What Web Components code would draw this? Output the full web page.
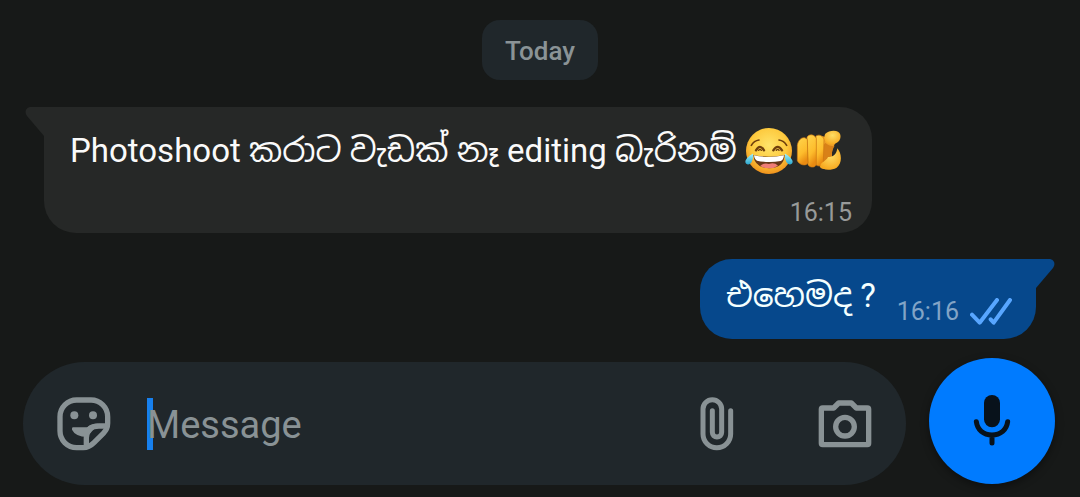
<!DOCTYPE html>
<html lang="si">
<head>
<meta charset="utf-8">
<meta name="viewport" content="width=device-width, initial-scale=1">
<title>Chat</title>
<style>
  html { background: #171918; }
  body { margin: 0; font-family: Roboto, "Noto Sans Sinhala", "Noto Sans", sans-serif; color: #fff; }
</style>
</head>
<body>
<chat-screen>
  <date-chip slot="log">Today</date-chip>
  <chat-message slot="log" side="in" time="16:15">Photoshoot කරාට වැඩක් නෑ editing බැරිනම් <emoji-joy></emoji-joy><emoji-point></emoji-point></chat-message>
  <chat-message slot="log" side="out" time="16:16">එහෙමද ?</chat-message>
  <chat-composer slot="composer"></chat-composer>
</chat-screen>

<script>
const define = (name, html, setup) => customElements.define(name, class extends HTMLElement {
  constructor() {
    super();
    this.attachShadow({ mode: 'open' }).innerHTML = html;
  }
  connectedCallback() { if (setup) setup(this, this.shadowRoot); }
});

define('chat-screen', `
  <style>
    :host { display: block; box-sizing: border-box; padding: 20px 24px 12px; }
    main { display: flex; flex-direction: column; gap: 26px; }
    footer { margin-top: 19px; }
  </style>
  <main><slot name="log"></slot></main>
  <footer><slot name="composer"></slot></footer>`);

define('date-chip', `
  <style>
    :host { display: block; box-sizing: border-box; height: 60px; align-self: center; padding: 1px 23px 0; margin-bottom: 1px; border-radius: 18px;
      background: #20272b; color: #8a9396; font-size: 26px; font-weight: 500; line-height: 60px; }
  </style>
  <slot></slot>`);

define('chat-message', `
  <style>
    :host { display: block; position: relative; box-sizing: border-box; max-width: 90%; border-radius: 32px; }
    :host([side="in"]) { align-self: flex-start; margin-left: 20px; padding: 19px 20px 5px 26px;
      border-top-left-radius: 0; background: #262827; --tone: #262827; color: #fafafa; }
    :host([side="out"]) { align-self: flex-end; margin-right: 20px; padding: 0 24px 0 26px; display: flex; gap: 21px;
      border-top-right-radius: 0; background: #06488c; --tone: #06488c; color: #f4ffff; }
    .text { font-size: 33px; line-height: 50px; white-space: nowrap; }
    :host([side="in"]) .text { padding-right: 10px; }
    :host([side="out"]) .text { line-height: 74px; padding-bottom: 6px; }
    .meta { display: flex; align-items: center; justify-content: flex-end; gap: 11px;
      font-size: 25px; line-height: 30px; color: #989a99; }
    :host([side="in"]) .meta { margin-top: 22px; }
    :host([side="out"]) .meta { align-self: flex-end; padding-bottom: 12px; color: #82a4c6; }
    .tail { position: absolute; top: 0; width: 20px; height: 30px; fill: var(--tone); }
    :host([side="in"]) .tail { right: calc(100% - 1px); }
    :host([side="out"]) .tail { left: calc(100% - 1px); transform: scaleX(-1); }
    .ticks { width: 42px; height: 28px; fill: none; stroke: #58a6ff; stroke-width: 12; stroke-linecap: round; stroke-linejoin: round; }
    :host([side="in"]) .ticks { display: none; }
  </style>
  <svg class="tail" viewBox="0 0 20 30" aria-hidden="true"><path d="M20 0H6C1 0-1 5 2 9L19 29H20Z"/></svg>
  <div class="text"><slot></slot></div>
  <div class="meta"><time></time>
    <svg class="ticks" viewBox="0 0 126 84" role="img" aria-label="Read"><path d="M6 50L29 74L81 6M62 64L71 74L120 6"/></svg>
  </div>`, (el, root) => { root.querySelector('time').textContent = el.getAttribute('time'); });

define('emoji-joy', `
  <style>
    :host { display: inline-block; vertical-align: -13px; }
    svg { display: block; width: 48px; height: 48px; }
  </style>
  <svg viewBox="0 0 144 144" role="img" aria-label="Face with tears of joy">
    <defs>
      <radialGradient id="f" cx=".5" cy=".38" r=".65"><stop offset="0" stop-color="#ffe46a"/><stop offset=".6" stop-color="#fdc93d"/><stop offset="1" stop-color="#ed8b18"/></radialGradient>
      <linearGradient id="t" x2="0" y2="1"><stop stop-color="#a4f2fa"/><stop offset="1" stop-color="#2ba7cf"/></linearGradient>
    </defs>
    <circle cx="72" cy="72" r="69" fill="url(#f)"/>
    <g fill="none" stroke="#70400d" stroke-linecap="round">
      <path d="M19 55Q27 41 42 39M102 39Q117 41 125 55" stroke-width="5"/>
      <path d="M33 70Q45 49 57 70M85 70Q98 49 111 70" stroke-width="7"/>
      <path d="M41 70Q45 64 49 70M94 70Q98 64 102 70" stroke-width="4"/>
    </g>
    <path d="M25 84Q72 94 119 84Q117 122 72 124Q28 122 25 84Z" fill="#673718"/>
    <path d="M27 85Q72 95 117 85Q116 99 107 102Q72 109 36 101Q28 97 27 85Z" fill="#fff"/>
    <path d="M46 116Q58 106 72 111Q88 105 99 116Q88 124 72 124Q56 124 46 116Z" fill="#ef7d76"/>
    <path d="M24 80C20 81 1 94 1 104C2 115 15 115 20 105C24 97 25 88 24 80ZM120 80C124 81 143 94 143 104C142 115 129 115 124 105C120 97 119 88 120 80Z" fill="url(#t)"/>
  </svg>`);

define('emoji-point', `
  <style>
    :host { display: inline-block; vertical-align: -13px; margin-left: 3px; }
    svg { display: block; width: 46px; height: 48px; }
  </style>
  <svg viewBox="0 0 138 144" role="img" aria-label="Index pointing at the viewer">
    <defs>
      <linearGradient id="h" x2=".35" y2="1"><stop stop-color="#ffd54d"/><stop offset=".65" stop-color="#fdbc2c"/><stop offset="1" stop-color="#e98b12"/></linearGradient>
      <radialGradient id="p" cx=".5" cy=".35" r=".65"><stop stop-color="#ffde65"/><stop offset="1" stop-color="#f7a91f"/></radialGradient>
    </defs>
    <path d="M78 27L122 40L112 60C106 72 108 90 110 100L84 126C73 125 70 120 71 111Z" fill="#eda028"/>
    <path d="M88 48C98 56 106 58 116 56C110 66 106 76 108 90C100 92 92 92 86 104L76 116L78 60Z" fill="#d88118"/>
    <g fill="url(#h)" stroke="#cb7711" stroke-width="2">
      <path d="M60 27C69 21 82 26 84 38L82 105C79 119 64 120 58 111Z"/>
      <path d="M33 30C41 19 57 23 61 35V111C60 123 41 123 36 113Z"/>
      <path d="M4 55C6 36 24 24 34 38L36 107C31 119 9 114 4 101Z"/>
    </g>
    <path d="M88 20C97 11 116 8 126 14C137 21 134 35 129 42C119 51 109 55 96 50C86 46 82 28 88 20Z" fill="url(#p)"/>
    <path d="M96 90C112 92 122 80 124 64C138 80 139 110 122 122C106 131 79 131 73 118C74 103 90 105 96 90Z" fill="url(#p)"/>
  </svg>`);

define('chat-composer', `
  <style>
    :host { display: flex; align-items: flex-start; gap: 23px; margin: 0 1px 0 -1px; font-size: 38px; }
    button { display: block; flex: none; padding: 0; border: 0; background: none; color: #899295; cursor: pointer; }
    svg { display: block; fill: none; stroke: currentColor; stroke-linecap: round; stroke-linejoin: round; }
    .field { display: flex; flex: 1; min-width: 0; align-items: center; box-sizing: border-box; height: 123px;
      margin-top: 4px; padding: 0 34px; border-radius: 62px; background: #20272b; }
    .entry { position: relative; flex: 1; min-width: 0; margin: 0 36px; }
    .caret { position: absolute; left: 0; top: 0; width: 6px; height: 52px; background: #1780ee; }
    input { position: relative; display: block; box-sizing: border-box; width: 100%; height: 52px; padding: 3px 0 0; border: 0; outline: 0;
      background: none; font: inherit; color: #fff; caret-color: transparent; }
    input::placeholder { color: #899295; opacity: 1; }
    .sticker { width: 54px; }
    .clip { width: 34px; margin-right: 84px; }
    .mic { display: grid; place-items: center; width: 126px; height: 126px; border-radius: 50%; background: #007bff; color: #08121b;
      box-shadow: 0 3px 8px #0006; }
  </style>
  <div class="field">
    <button class="sticker" type="button" aria-label="Stickers">
      <svg width="54" height="54" viewBox="-1 -1 162 162">
        <path stroke-width="16" d="M78 151H58A50 50 0 0 1 8 101V58A50 50 0 0 1 58 8H101A50 50 0 0 1 151 58V78C151 91 147 99 138 108L110 136C100 146 91 151 78 151Z"/>
        <path stroke-width="16" stroke-linecap="butt" d="M151 86H125C99 86 87 99 87 122V148"/>
        <path fill="currentColor" stroke="none" d="M47 90H90Q101 80 122 79L90 119Q54 118 44 97Q43 90 47 90Z"/>
        <circle cx="51" cy="54" r="12" fill="currentColor" stroke="none"/><circle cx="107" cy="54" r="12" fill="currentColor" stroke="none"/>
      </svg>
    </button>
    <div class="entry"><span class="caret"></span><input type="text" placeholder="Message" aria-label="Message"></div>
    <button class="clip" type="button" aria-label="Attach">
      <svg width="34" height="54" viewBox="60 140 102 162" stroke-width="15"><path d="M152 181V251A41 41 0 0 1 69 251V176A28 28 0 0 1 125 176V246A14 14 0 0 1 97 246V181"/></svg>
    </button>
    <button type="button" aria-label="Camera">
      <svg width="54" height="54" viewBox="413 140 162 162" stroke-width="16"><path d="M427 173H460L475 158H513L528 173H561Q565 173 565 177V279Q565 283 561 283H427Q423 283 423 279V177Q423 173 427 173Z"/><circle cx="494" cy="229" r="28"/></svg>
    </button>
  </div>
  <button class="mic" type="button" aria-label="Record voice message">
    <svg width="38" height="52" viewBox="220 134 114 156" stroke-width="15"><rect x="253" y="134" width="48" height="97" rx="24" fill="currentColor" stroke="none"/><path d="M230 214C233 238 251 254 277 254S321 238 324 214M277 254V278"/></svg>
  </button>`);
</script>
</body>
</html>
